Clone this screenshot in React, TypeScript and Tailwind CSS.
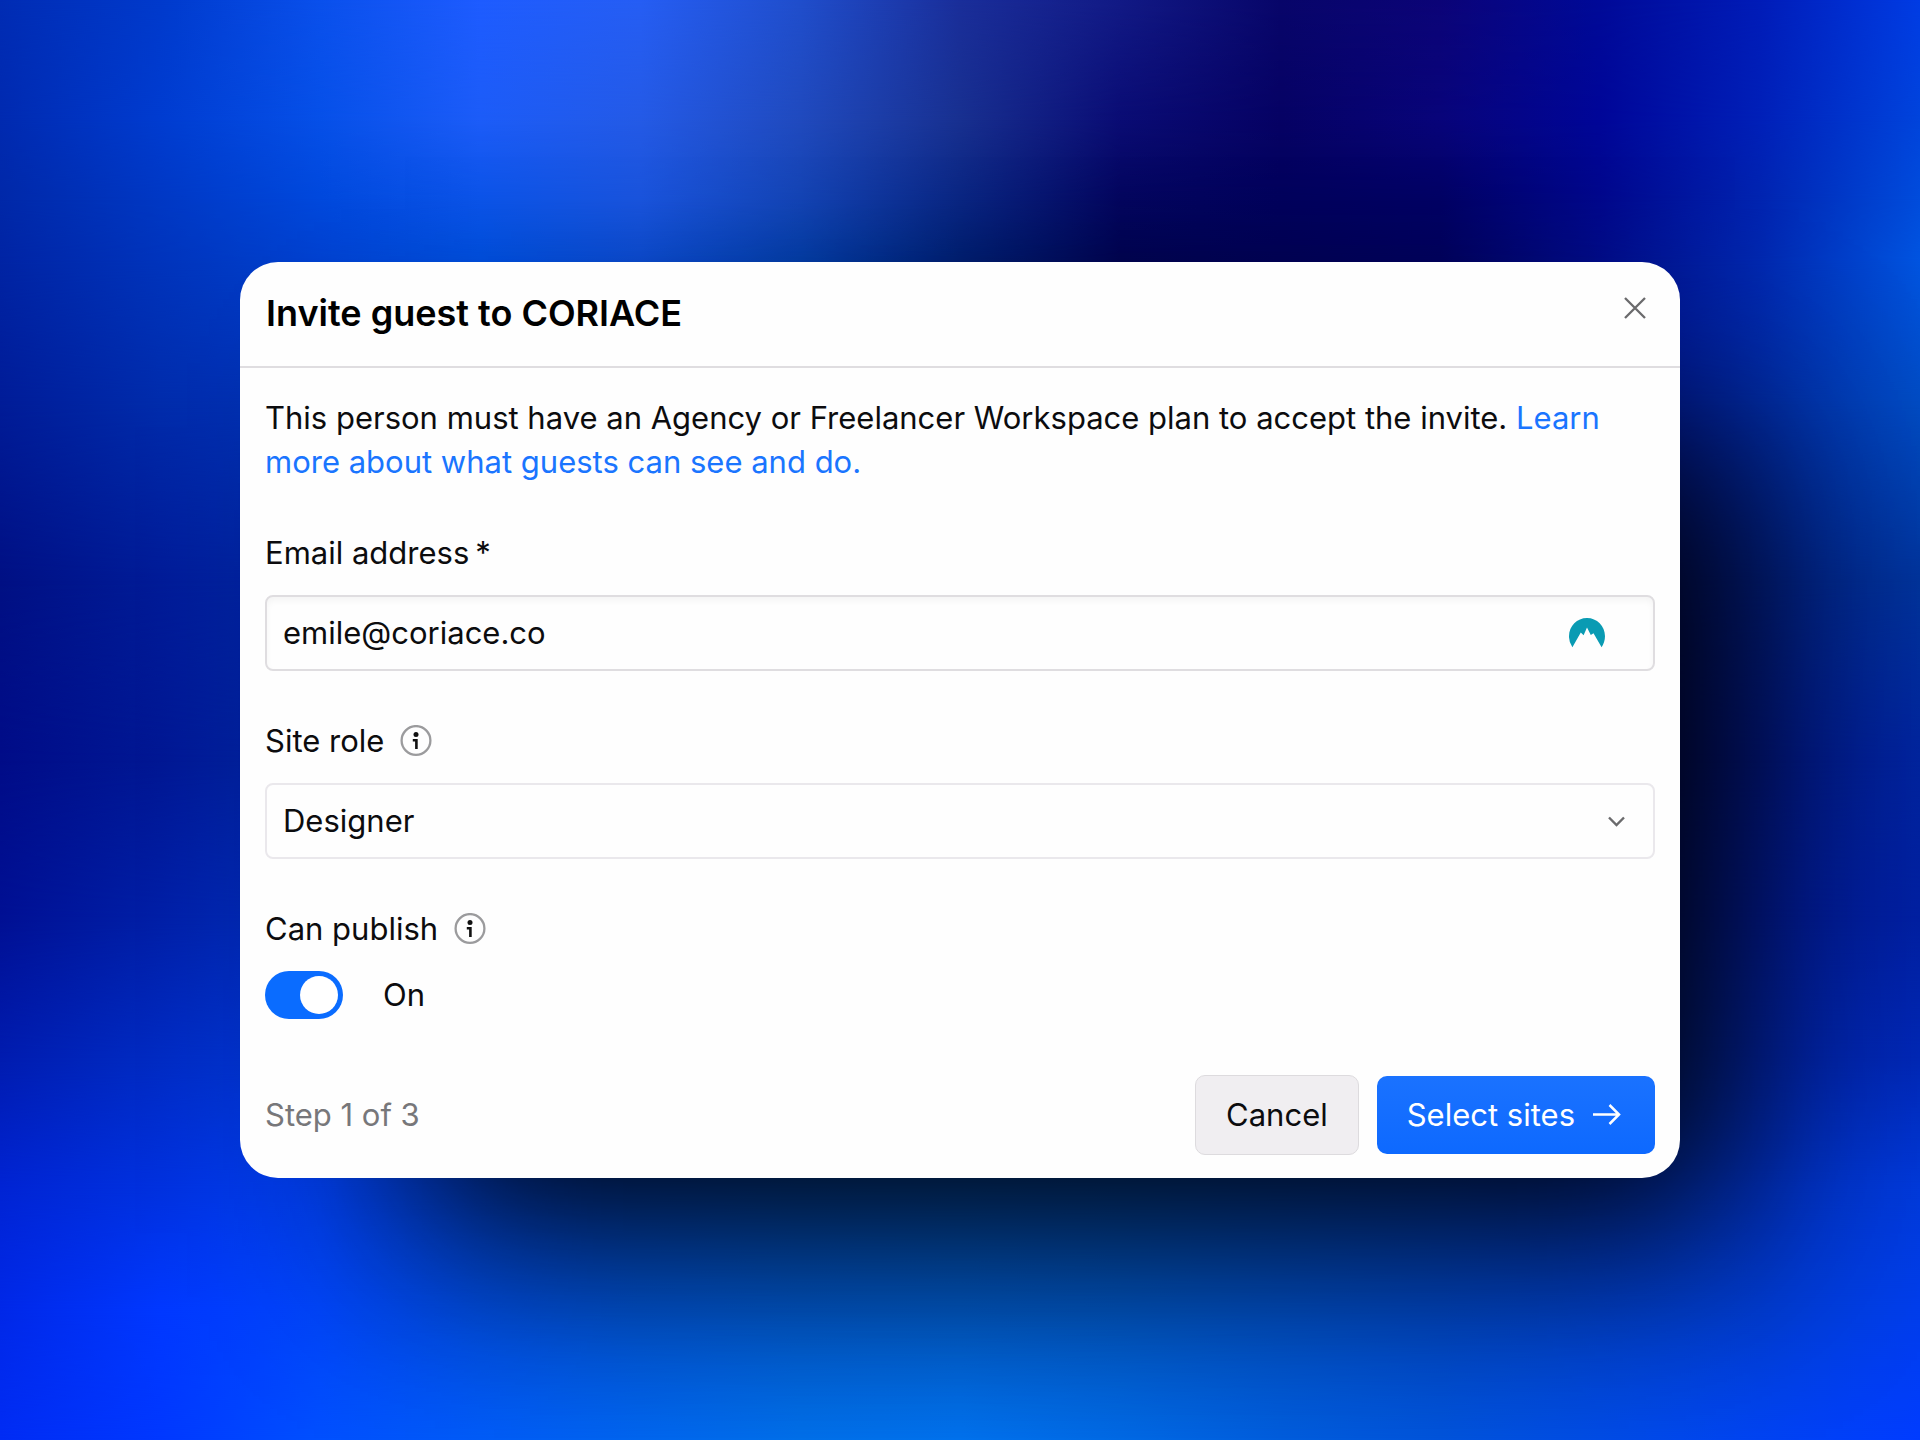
import { useState } from "react";

// Backdrop colours, left to right every 160px, one row per height.
const backdropRows = [
  { y: 0, colors: ["#002cb4", "#003acc", "#0a50ec", "#1e5cff", "#265ef4", "#204ecc", "#1a2e9a", "#121a86", "#08066a", "#0c0478", "#000a98", "#001cb8", "#003ce4"] },
  { y: 120, colors: ["#002ab0", "#003cd0", "#0650e8", "#1c5cf8", "#245ae6", "#204abe", "#183090", "#0a0c74", "#060264", "#08047a", "#000698", "#0020b8", "#0044dc"] },
  { y: 200, colors: ["#0028a8", "#0038c4", "#0048dc", "#0c54e8", "#1a54dc", "#1444b4", "#0a2682", "#04065e", "#02025c", "#020264", "#00088c", "#0024b0", "#004cdc"] },
  { y: 260, colors: ["#0024a4", "#0034bc", "#0042d0", "#004edc", "#0c4acc", "#043ca4", "#001e70", "#000450", "#000254", "#00025c", "#000c88", "#0028b0", "#0054e0"] },
  { y: 400, colors: ["#001c98", "#002cac", "#0034b8", "#0038c0", "#0038b8", "#002890", "#001868", "#000850", "#000254", "#000260", "#001290", "#002ca8", "#004cc4"] },
  { y: 580, colors: ["#001084", "#001c98", "#0028a8", "#002cac", "#002ca8", "#002890", "#001c70", "#001060", "#000c60", "#000c68", "#001080", "#002088", "#00349c"] },
  { y: 760, colors: ["#000c88", "#001894", "#0028a8", "#002cac", "#002cac", "#002ca0", "#002490", "#001c80", "#001478", "#001078", "#001080", "#001888", "#0024a0"] },
  { y: 920, colors: ["#001094", "#0020a8", "#0030c0", "#0034c4", "#0038bc", "#0038b4", "#0034a8", "#0030a0", "#002898", "#002090", "#001c94", "#001c9c", "#0020a4"] },
  { y: 1060, colors: ["#001cb0", "#002cc4", "#0038d8", "#0040d8", "#0044c8", "#0048c0", "#0048b8", "#0044b0", "#003ca8", "#0034a8", "#002cac", "#0026b0", "#0028b8"] },
  { y: 1190, colors: ["#0024d4", "#0032e0", "#0040f0", "#0048e4", "#004cd0", "#0050c4", "#0052c0", "#004ebc", "#0046bc", "#0040c0", "#0038c4", "#0034cc", "#003adc"] },
  { y: 1310, colors: ["#0028e8", "#0038ff", "#0046fc", "#0050e8", "#0056d8", "#005ad0", "#005ccc", "#0058c8", "#0050c8", "#0048c8", "#0042d0", "#003ed8", "#003eec"] },
  { y: 1440, colors: ["#002cf4", "#0038ff", "#0050ff", "#005cf8", "#0066f0", "#0070ea", "#0072ee", "#006ae6", "#005ede", "#0054dc", "#004ce6", "#0044f2", "#003cff"] },
];

const Backdrop = () => (
  <svg className="absolute inset-0 h-full w-full" viewBox="0 0 1920 1440" preserveAspectRatio="none" aria-hidden="true">
    <defs>
      {backdropRows.map((row, i) => {
        const from = i === 0 ? -1 : backdropRows[i - 1].y;
        return (
          <g key={row.y}>
            <linearGradient id={`row-${i}`} x1="0" x2="1" y1="0" y2="0">
              {row.colors.map((color, c) => (
                <stop key={c} offset={c / (row.colors.length - 1)} stopColor={color} />
              ))}
            </linearGradient>
            <linearGradient id={`fade-${i}`} gradientUnits="userSpaceOnUse" x1="0" x2="0" y1={from} y2={row.y}>
              <stop offset="0" stopColor="#fff" stopOpacity="0" />
              <stop offset="1" stopColor="#fff" />
            </linearGradient>
            <mask id={`mask-${i}`} maskUnits="userSpaceOnUse" x="0" y="0" width="1920" height="1440">
              <rect width="1920" height="1440" fill={`url(#fade-${i})`} />
            </mask>
          </g>
        );
      })}
    </defs>
    {backdropRows.map((row, i) => (
      <rect key={row.y} width="1920" height="1440" fill={`url(#row-${i})`} mask={i === 0 ? undefined : `url(#mask-${i})`} />
    ))}
  </svg>
);

const InfoButton = ({ label }: { label: string }) => (
  <button type="button" aria-label={label}>
    <svg width="32" height="32" viewBox="0 0 32 32" fill="none">
      <circle cx="16" cy="15.500" r="14.400" stroke="#9b9b9d" strokeWidth="2.3" />
      <circle cx="16" cy="9.500" r="2.500" fill="#111" />
      <path d="M12.800 15.300h3.600V24" stroke="#111" strokeWidth="2.6" />
    </svg>
  </button>
);

const VaultIcon = () => (
  <svg width="36" height="30" viewBox="0 0 36 30" fill="#0a9bb3" aria-hidden="true">
    <path d="M3.400 29.200A18 18 0 0 1 0 18.200C0 8.100 8.100 0 18 0s18 8.100 18 18.200c0 4.100-1.300 7.900-3.400 11L24.500 15.200l-2.700 1.800L18 9.400l-3.400 7.800-2.800-2.600z" />
  </svg>
);

export default function App() {
  const [email, setEmail] = useState("emile@coriace.co");
  const [role, setRole] = useState("Designer");
  const [canPublish, setCanPublish] = useState(true);

  return (
    <main className="relative flex min-h-screen items-center justify-center overflow-hidden bg-[#0028a8] font-['Inter',sans-serif] text-[31px] leading-[44px] text-[#0c0c0e]">
      <Backdrop />
      <section
        role="dialog"
        aria-labelledby="invite-title"
        className="relative w-3/4 rounded-[38px] bg-[#fefefe] shadow-[110px_110px_180px_-55px_rgba(0,0,0,0.95)]"
      >
        <header className="flex h-[106px] items-center justify-between border-b-2 border-[#dfdde0] px-[26px]">
          <h1 id="invite-title" className="mb-0.5 text-[36px] font-semibold text-black">
            Invite guest to CORIACE
          </h1>
          <button type="button" aria-label="Close" className="mb-3 p-2">
            <svg width="22" height="22" viewBox="0 0 22 22" fill="none" stroke="#6a6a6c" strokeWidth="2.3">
              <path d="M1 1l20 20M21 1L1 21" />
            </svg>
          </button>
        </header>

        <form className="px-[25px] pt-7 pb-[23px]" onSubmit={(e) => e.preventDefault()}>
          <p>
            This person must have an Agency or Freelancer Workspace plan to accept the invite.{" "}
            <a href="#guests" className="text-[#1a75ff]">
              Learn more about what guests can see and do.
            </a>
          </p>

          <div className="mt-[47px]">
            <label htmlFor="email" className="flex gap-1.5">
              Email address<span>*</span>
            </label>
            <div className="mt-5 flex h-[76px] items-center rounded-lg border-2 border-[#dfdde0] pr-12 pl-4 shadow-[inset_0_4px_6px_rgba(0,0,0,0.04)]">
              <input
                id="email"
                type="email"
                className="min-w-0 flex-1 bg-transparent outline-none"
                value={email}
                onChange={(e) => setEmail(e.target.value)}
              />
              <VaultIcon />
            </div>
          </div>

          <div className="mt-12">
            <div className="flex items-center gap-4">
              <label htmlFor="role">Site role</label>
              <InfoButton label="About site roles" />
            </div>
            <div className="relative mt-5">
              <select
                id="role"
                className="block h-[76px] w-full appearance-none rounded-lg border-2 border-[#eae8ec] bg-transparent px-4 outline-none"
                value={role}
                onChange={(e) => setRole(e.target.value)}
              >
                <option>Designer</option>
              </select>
              <svg className="pointer-events-none absolute inset-y-0 right-7 my-auto" width="20" height="12" viewBox="0 0 20 12" fill="none" stroke="#6a6a6c" strokeWidth="2.4">
                <path d="M2 2.500l7.500 7.500L17 2.500" />
              </svg>
            </div>
          </div>

          <div className="mt-12">
            <div className="flex items-center gap-4">
              <label htmlFor="publish">Can publish</label>
              <InfoButton label="About publishing" />
            </div>
            <div className="mt-5 flex items-center gap-10">
              <input
                id="publish"
                type="checkbox"
                role="switch"
                className="flex h-12 w-[78px] appearance-none items-center rounded-full bg-[#9b9b9d] p-[5px] before:size-[38px] before:rounded-full before:bg-white checked:justify-end checked:bg-[#0a6cff]"
                checked={canPublish}
                onChange={(e) => setCanPublish(e.target.checked)}
              />
              <span>{canPublish ? "On" : "Off"}</span>
            </div>
          </div>

          <footer className="mt-14 flex items-center gap-[18px]">
            <span className="mr-auto text-[#77777a]">Step 1 of 3</span>
            <button type="button" className="h-20 rounded-[10px] border border-[#dddbde] bg-[#f0eef1] px-[30px]">
              Cancel
            </button>
            <button type="submit" className="flex h-[78px] items-center gap-[18px] rounded-[10px] bg-linear-to-b from-[#1a72ff] to-[#0d69ff] pr-[34px] pl-[30px] text-white">
              Select sites
              <svg width="28" height="22" viewBox="0 0 28 22" fill="none" stroke="currentColor" strokeWidth="2.5">
                <path d="M0 10.500h26M16.500 1L26 10.500 16.500 20" />
              </svg>
            </button>
          </footer>
        </form>
      </section>
    </main>
  );
}
